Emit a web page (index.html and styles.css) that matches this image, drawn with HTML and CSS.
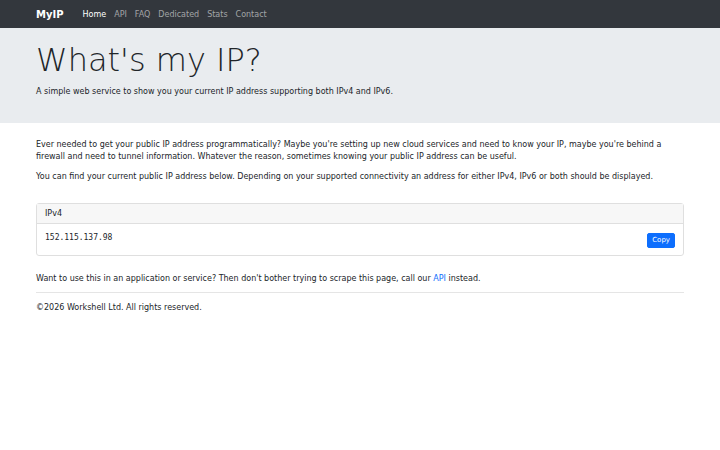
FILE: index.html
```html
<!DOCTYPE html>
<html lang="en">
<head>
<meta charset="utf-8">
<title>MyIP</title>
<link rel="stylesheet" href="styles.css">
</head>
<body>
<nav class="navbar">
  <div class="container nav-inner">
    <a class="brand" href="#">MyIP</a>
    <ul class="nav-links">
      <li><a class="active" href="#">Home</a></li>
      <li><a href="#">API</a></li>
      <li><a href="#">FAQ</a></li>
      <li><a href="#">Dedicated</a></li>
      <li><a href="#">Stats</a></li>
      <li><a href="#">Contact</a></li>
    </ul>
  </div>
</nav>
<header class="hero">
  <div class="container">
    <h1 class="hero-title">What's my IP?</h1>
    <p class="hero-lead">A simple web service to show you your current IP address supporting both IPv4 and IPv6.</p>
  </div>
</header>
<main class="container main">
  <p>Ever needed to get your public IP address programmatically? Maybe you're setting up new cloud services and need to know your IP, maybe you're behind a firewall and need to tunnel information. Whatever the reason, sometimes knowing your public IP address can be useful.</p>
  <p>You can find your current public IP address below. Depending on your supported connectivity an address for either IPv4, IPv6 or both should be displayed.</p>
  <div class="card">
    <div class="card-header">IPv4</div>
    <div class="card-body">
      <code class="ip">152.115.137.98</code>
      <button class="btn-copy" type="button">Copy</button>
    </div>
  </div>
  <p class="api-note">Want to use this in an application or service? Then don't bother trying to scrape this page, call our <a href="#">API</a> instead.</p>
  <footer class="footer">©2026 Workshell Ltd. All rights reserved.</footer>
</main>
</body>
</html>
```
FILE: styles.css
```css
* { box-sizing: border-box; }
html, body { margin: 0; padding: 0; }
body {
  font-family: "DejaVu Sans", sans-serif;
  font-size: 8px;
  line-height: 1.5;
  color: #212529;
  background: #fff;
}
.container {
  padding: 0 36px;
}
.navbar {
  background: #33373d;
  height: 28px;
}
.nav-inner {
  display: flex;
  align-items: center;
  height: 28px;
  padding-top: 1px;
}
.brand {
  color: #fff;
  font-weight: bold;
  font-size: 10px;
  text-decoration: none;
  margin-right: 19px;
}
.nav-links {
  display: flex;
  list-style: none;
  margin: 0;
  padding: 0;
  gap: 8px;
}
.nav-links a {
  color: rgba(255,255,255,0.55);
  text-decoration: none;
  font-size: 8px;
}
.nav-links a.active { color: #fff; }
.hero {
  background: #e9ecef;
  padding: 13px 0 25px;
}
.hero-title {
  margin: 0;
  font-weight: 200;
  font-size: 32px;
  line-height: 1.2;
  color: #212529;
}
.hero-lead {
  margin: 7px 0 0;
}
.main { padding-top: 16px; }
.main p { margin: 0 0 8px; }
.card {
  border: 1px solid #dfdfdf;
  border-radius: 3px;
  margin: 20px 0 17px;
}
.card-header {
  background: #f7f7f7;
  border-bottom: 1px solid #dfdfdf;
  padding: 4px 8px;
  height: 20px;
}
.card-body {
  display: flex;
  justify-content: space-between;
  align-items: center;
  padding: 8px;
  height: 31px;
}
.ip {
  font-family: "DejaVu Sans Mono", monospace;
  font-size: 8px;
  color: #212529;
  margin-top: -3px;
}
.btn-copy {
  font-family: inherit;
  font-size: 7px;
  color: #fff;
  background: #0d6efd;
  border: 1px solid #0d6efd;
  border-radius: 2px;
  padding: 2px 4px;
  line-height: 1.4;
  margin-top: 1px;
}
.api-note a { color: #0d6efd; text-decoration: none; }
.main .api-note { margin-bottom: 7px; }
.footer {
  border-top: 1px solid #e5e5e5;
  padding-top: 9px;
}
```
